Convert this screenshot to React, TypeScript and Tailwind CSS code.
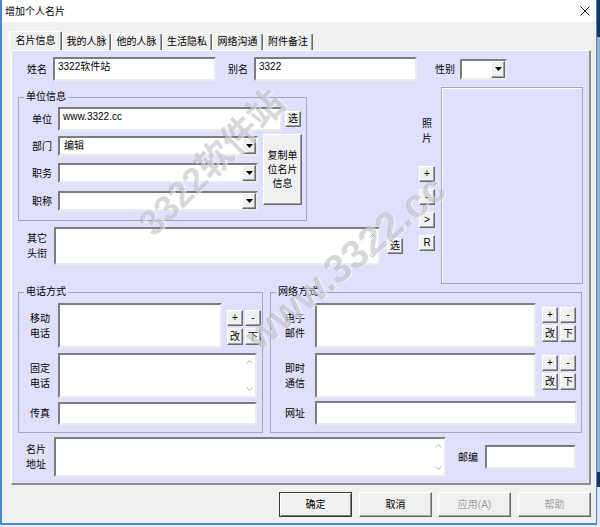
import React from 'react';

const sunken = 'bg-white border-2 border-t-[#7c7c7c] border-l-[#7c7c7c] border-r-[#ebebeb] border-b-[#ebebeb]';
const raised = 'bg-[#f0f0f0] border border-t-white border-l-white border-r-[#6a6a6a] border-b-[#6a6a6a] shadow-[inset_-1px_-1px_0_#a0a0a0]';

function Btn({ children, className = '' }: { children?: React.ReactNode; className?: string }) {
  return <div className={`${raised} flex shrink-0 items-center justify-center leading-none ${className}`}>{children}</div>;
}

const Chev = ({ up }: { up?: boolean }) => (
  <svg width="7" height="4" viewBox="0 0 7 4">
    <path d={up ? 'M0.5 3.5L3.5 0.5L6.5 3.5' : 'M0.5 0.5L3.5 3.5L6.5 0.5'} fill="none" stroke="#b4b4b4" />
  </svg>
);

function Area({ className = '', scroll = false, children }: { className?: string; scroll?: boolean; children?: React.ReactNode }) {
  return (
    <div className={`${sunken} flex shrink-0 ${className}`}>
      <div className="flex-1 pl-[3px] pt-[1px] leading-[14px]">{children}</div>
      {scroll && (
        <div className="flex w-[12px] flex-col items-center justify-between py-[5px]">
          <Chev up />
          <Chev />
        </div>
      )}
    </div>
  );
}

function Select({ className = '', value }: { className?: string; value?: string }) {
  return (
    <div className={`${sunken} flex h-[20px] shrink-0 ${className}`}>
      <div className="flex-1 pl-[4px] leading-[16px]">{value}</div>
      <div className={`${raised} flex w-[14px] items-center justify-center`}>
        <svg width="7" height="4" viewBox="0 0 7 4">
          <path d="M0 0H7L3.5 4Z" fill="#000" />
        </svg>
      </div>
    </div>
  );
}

function Label({ children, className = '' }: { children: React.ReactNode; className?: string }) {
  return <div className={`w-[20px] shrink-0 leading-[15px] ${className}`}>{children}</div>;
}

function EditButtons({ className = '' }: { className?: string }) {
  return (
    <div className={`grid w-[34px] shrink-0 grid-cols-2 gap-x-[2px] gap-y-[2px] self-start ${className}`}>
      <Btn className="h-[16px]">+</Btn>
      <Btn className="h-[16px]">-</Btn>
      <Btn className="h-[17px]">改</Btn>
      <Btn className="h-[17px]">下</Btn>
    </div>
  );
}

const tabs = [
  { t: '名片信息', w: 'w-[53px] h-[19px]', on: true },
  { t: '我的人脉', w: 'w-[49px] h-[17px]' },
  { t: '他的人脉', w: 'w-[51px] h-[17px]' },
  { t: '生活隐私', w: 'w-[50px] h-[17px]' },
  { t: '网络沟通', w: 'w-[51px] h-[17px]' },
  { t: '附件备注', w: 'w-[50px] h-[17px]' },
];

export default function App() {
  return (
    <div className="relative flex h-[527px] w-[600px] flex-col overflow-hidden bg-[#e9eef4] font-['Liberation_Sans','Noto_Sans_CJK_SC',sans-serif] text-[10px] text-black">
      <div className="flex h-[525px]">
        <div className="flex w-[597px] flex-col border-b-2 border-l-2 border-r border-[#3f8bd9] bg-[#f0f0f0]">
          {/* title bar */}
          <div className="flex h-[22px] shrink-0 items-center justify-between bg-white pl-[3px] pr-[6px]">
            <span>增加个人名片</span>
            <svg width="10" height="10" viewBox="0 0 10 10">
              <path d="M0.5 0.5L9.5 9.5M9.5 0.5L0.5 9.5" stroke="#111" strokeWidth="1" />
            </svg>
          </div>

          {/* tabs */}
          <div className="flex h-[28px] shrink-0 items-end pl-[7px]">
            {tabs.map((tab) => (
              <div
                key={tab.t}
                className={`${tab.w} flex items-center justify-center rounded-t-[2px] border-l border-t border-r border-l-white border-t-white border-r-[#6a6a6a] bg-[#f0f0f0] pb-[1px] shadow-[inset_-1px_0_0_#a0a0a0]`}
              >
                {tab.t}
              </div>
            ))}
          </div>

          {/* panel */}
          <div className="ml-[9px] flex h-[435px] w-[580px] shrink-0 flex-col border-b-2 border-l border-r-2 border-t border-b-[#8c8c8c] border-l-white border-r-[#8c8c8c] border-t-white bg-[#e0e0fd]">
            {/* row 1 */}
            <div className="mt-[6px] flex h-[24px] items-center">
              <div className="ml-[15px] w-[20px]">姓名</div>
              <Area className="ml-[6px] h-[24px] w-[163px]">3322软件站</Area>
              <div className="ml-[12px] w-[20px]">别名</div>
              <Area className="ml-[6px] h-[24px] w-[163px]">3322</Area>
              <div className="ml-[18px] w-[20px]">性别</div>
              <Select className="ml-[5px] h-[21px] w-[47px]" />
            </div>

            {/* middle section */}
            <div className="mt-[6px] flex h-[197px] items-start">
              <div className="ml-[6px] flex w-[384px] flex-col">
                <fieldset className="mt-[3px] h-[131px] w-[289px] border border-[#a6a6b8]">
                  <legend className="ml-[5px] px-[2px] leading-[14px]">单位信息</legend>
                  <div className="mt-[3px] flex h-[24px] items-center">
                    <div className="ml-[13px] w-[20px]">单位</div>
                    <Area className="ml-[6px] h-[24px] w-[224px]">www.3322.cc</Area>
                    <Btn className="ml-[3px] h-[16px] w-[16px]">选</Btn>
                  </div>
                  <div className="mt-[3px] flex">
                    <div className="flex flex-col">
                      <div className="mt-[2px] flex h-[20px] items-center">
                        <div className="ml-[13px] w-[20px]">部门</div>
                        <Select className="ml-[6px] w-[200px]" value="编辑" />
                      </div>
                      <div className="mt-[7px] flex h-[20px] items-center">
                        <div className="ml-[13px] w-[20px]">职务</div>
                        <Select className="ml-[6px] w-[200px]" />
                      </div>
                      <div className="mt-[8px] flex h-[20px] items-center">
                        <div className="ml-[13px] w-[20px]">职称</div>
                        <Select className="ml-[6px] w-[200px]" />
                      </div>
                    </div>
                    <Btn className="ml-[5px] h-[71px] w-[39px] flex-col text-center leading-[14px]">
                      <span className="leading-[14px]">复制单</span>
                      <span className="leading-[14px]">位名片</span>
                      <span className="leading-[14px]">信息</span>
                    </Btn>
                  </div>
                </fieldset>

                <div className="mt-[6px] flex h-[38px] items-center">
                  <Label className="ml-[9px]">
                    其它
                    <br />
                    头衔
                  </Label>
                  <Area scroll className="ml-[7px] h-[38px] w-[326px]" />
                  <Btn className="ml-[7px] h-[16px] w-[16px]">选</Btn>
                </div>
              </div>

              <div className="ml-[17px] flex w-[16px] flex-col items-center">
                <div className="mt-[29px] leading-[15px]">
                  照
                  <br />
                  片
                </div>
                <Btn className="mt-[20px] h-[16px] w-[16px]">+</Btn>
                <Btn className="mt-[7px] h-[16px] w-[16px]">-</Btn>
                <Btn className="mt-[7px] h-[16px] w-[16px]">&gt;</Btn>
                <Btn className="mt-[7px] h-[16px] w-[16px]">R</Btn>
              </div>

              <div className="ml-[6px] h-[197px] w-[142px] border border-[#a8a8b0] shadow-[inset_1px_1px_0_#ffffff]" />
            </div>

            {/* contact groups */}
            <div className="mt-[1px] flex">
              <fieldset className="ml-[6px] h-[148px] w-[245px] border border-[#a6a6b8]">
                <legend className="ml-[5px] px-[2px] leading-[14px]">电话方式</legend>
                <div className="mt-[4px] flex items-center">
                  <Label className="ml-[11px]">
                    移动
                    <br />
                    电话
                  </Label>
                  <Area className="ml-[8px] h-[45px] w-[164px]" />
                  <EditButtons className="ml-[5px] mt-[7px]" />
                </div>
                <div className="mt-[5px] flex items-center">
                  <Label className="ml-[11px]">
                    固定
                    <br />
                    电话
                  </Label>
                  <Area scroll className="ml-[8px] h-[45px] w-[199px]" />
                </div>
                <div className="mt-[4px] flex items-center">
                  <Label className="ml-[11px]">传真</Label>
                  <Area className="ml-[8px] h-[23px] w-[199px]" />
                </div>
              </fieldset>

              <fieldset className="ml-[7px] h-[148px] w-[312px] border border-[#a6a6b8]">
                <legend className="ml-[5px] px-[2px] leading-[14px]">网络方式</legend>
                <div className="mt-[4px] flex items-center">
                  <Label className="ml-[14px]">
                    电子
                    <br />
                    邮件
                  </Label>
                  <Area className="ml-[10px] h-[45px] w-[221px]" />
                  <EditButtons className="ml-[6px] mt-[4px]" />
                </div>
                <div className="mt-[5px] flex items-center">
                  <Label className="ml-[14px]">
                    即时
                    <br />
                    通信
                  </Label>
                  <Area className="ml-[10px] h-[45px] w-[221px]" />
                  <EditButtons className="ml-[6px] mt-[2px]" />
                </div>
                <div className="mt-[3px] flex items-center">
                  <Label className="ml-[14px]">网址</Label>
                  <Area className="ml-[10px] h-[24px] w-[262px]" />
                </div>
              </fieldset>
            </div>

            {/* address */}
            <div className="mt-[4px] flex h-[40px] items-center">
              <Label className="ml-[14px]">
                名片
                <br />
                地址
              </Label>
              <Area scroll className="ml-[8px] h-[40px] w-[392px]" />
              <div className="ml-[12px] w-[20px]">邮编</div>
              <Area className="ml-[7px] h-[24px] w-[91px]" />
            </div>
          </div>

          {/* dialog buttons */}
          <div className="mt-[7px] flex h-[25px]">
            <div className="ml-[277px] flex w-[73px] items-center justify-center border border-[#3a3a3a] bg-[#f0f0f0] shadow-[inset_1px_1px_0_#ffffff,inset_-1px_-1px_0_#7a7a7a]">
              确定
            </div>
            <Btn className="ml-[7px] w-[73px]">取消</Btn>
            <Btn className="ml-[6px] w-[73px] text-[#a0a0a0]">应用(A)</Btn>
            <Btn className="ml-[7px] w-[73px] text-[#a0a0a0]">帮助</Btn>
          </div>
        </div>

        {/* desktop behind window */}
        <div className="flex w-[3px] flex-col">
          <div className="h-[37px] bg-[#1f3550]" />
          <div className="h-[435px] bg-[#9fb1c4]" />
          <div className="h-[15px] bg-[#1f3550]" />
          <div className="flex-1 bg-[#dfe6ee]" />
        </div>
      </div>
      <div className="h-[2px] bg-[#e9eef4]" />

      {/* watermark */}
      <div className="pointer-events-none absolute left-[212px] top-[163px] -translate-x-1/2 -translate-y-1/2 -rotate-45 whitespace-nowrap text-[36px] font-bold text-[rgba(120,120,130,0.28)] [text-shadow:1px_1px_0_rgba(255,255,255,0.6)]">
        3322软件站
      </div>
      <div className="pointer-events-none absolute left-[345px] top-[262px] -translate-x-1/2 -translate-y-1/2 -rotate-[40deg] whitespace-nowrap text-[40px] font-bold text-[rgba(120,120,130,0.28)] [text-shadow:1px_1px_0_rgba(255,255,255,0.6)]">
        www.3322.cc
      </div>
    </div>
  );
}
